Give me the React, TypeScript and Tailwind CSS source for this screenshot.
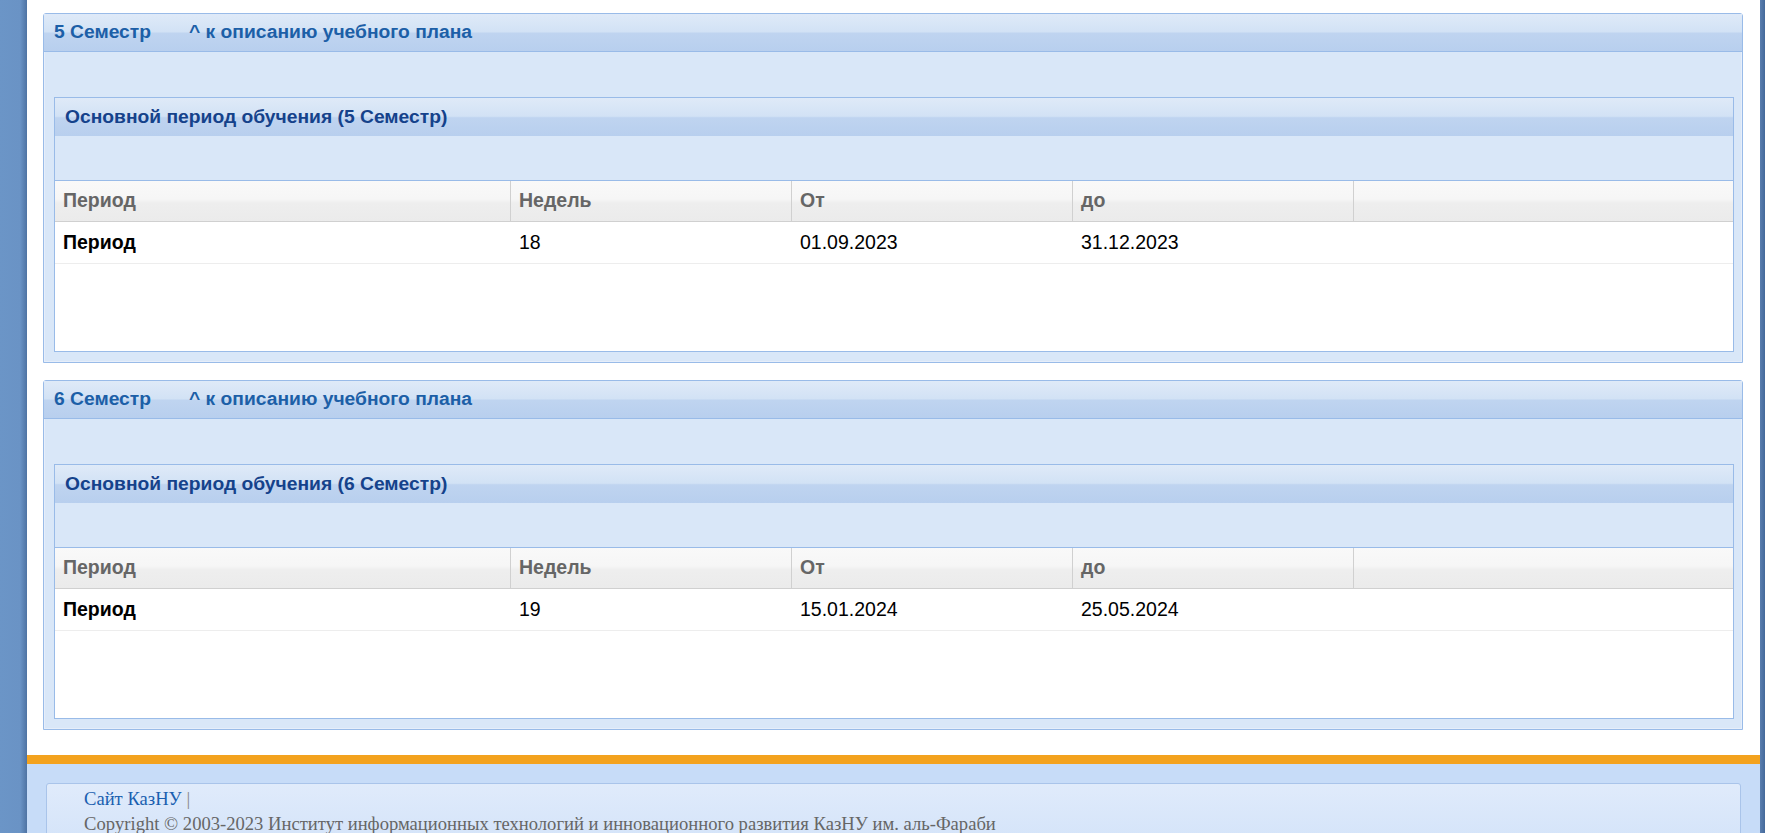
import React from 'react';

type Row = { name: string; weeks: string; from: string; to: string };

const semesters: { num: number; row: Row }[] = [
  { num: 5, row: { name: 'Период', weeks: '18', from: '01.09.2023', to: '31.12.2023' } },
  { num: 6, row: { name: 'Период', weeks: '19', from: '15.01.2024', to: '25.05.2024' } },
];

const headerBg =
  'bg-[linear-gradient(to_bottom,#dfeaf8_0%,#d2e2f5_48%,#bfd4f0_52%,#b8cfee_100%)]';

const SemesterPanel = ({ num, row }: { num: number; row: Row }) => {
  return (
    <div className="border border-[#99bbe8] rounded-t-[3px] bg-[#d9e7f8] shadow-[inset_0_0_0_1px_#e6eefa]">
      <div className={`h-[38px] flex items-center px-[10px] border-b border-[#99bbe8] ${headerBg}`}>
        <span className="text-[19.25px] font-bold text-[#1c5fa7]">{num} Семестр</span>
        <a className="ml-[38px] text-[19.25px] font-bold text-[#1c5fa7] cursor-pointer">^ к описанию учебного плана</a>
      </div>
      <div className="pt-[45px] pl-[10px] pr-[8px] pb-[10px]">
        <div className="border border-[#99bbe8] bg-white">
          <div className={`h-[38px] flex items-center px-[10px] ${headerBg}`}>
            <span className="text-[19.25px] font-bold text-[#15428b]">
              Основной период обучения ({num} Семестр)
            </span>
          </div>
          <div className="h-[45px] bg-[#d9e7f8] border-b border-[#99bbe8]" />
          <div className="h-[41px] flex border-b border-[#d0d0d0] bg-[linear-gradient(to_bottom,#f9f9f9_0%,#f6f6f6_45%,#eeeeee_55%,#ebebeb_100%)] text-[19.5px] font-bold text-[#666]">
            <div className="w-[456px] flex items-center px-[8px] border-r border-[#d0d0d0]">Период</div>
            <div className="w-[281px] flex items-center px-[8px] border-r border-[#d0d0d0]">Недель</div>
            <div className="w-[281px] flex items-center px-[8px] border-r border-[#d0d0d0]">От</div>
            <div className="w-[281px] flex items-center px-[8px] border-r border-[#d0d0d0]">до</div>
            <div className="flex-1" />
          </div>
          <div className="h-[42px] flex border-b border-[#ededed] text-[19.5px] text-black">
            <div className="w-[456px] flex items-center px-[8px] font-bold">{row.name}</div>
            <div className="w-[281px] flex items-center px-[8px]">{row.weeks}</div>
            <div className="w-[281px] flex items-center px-[8px]">{row.from}</div>
            <div className="w-[281px] flex items-center px-[8px]">{row.to}</div>
            <div className="flex-1" />
          </div>
          <div className="h-[87px]" />
        </div>
      </div>
    </div>
  );
};

export default function App() {
  return (
    <div className="min-h-screen flex bg-white font-['Liberation_Sans',Arial,sans-serif]">
      <div className="w-[27px] shrink-0 bg-[linear-gradient(to_right,#6b95c7_0%,#6a93c5_75%,#4e73a3_100%)]" />
      <div className="flex-1 flex flex-col">
        <div className="pt-[13px] pb-[25px] pl-[16px] pr-[17px] flex flex-col gap-[17px]">
          {semesters.map((s) => (
            <SemesterPanel key={s.num} num={s.num} row={s.row} />
          ))}
        </div>
        <div className="h-[9px] bg-[#f3a21e]" />
        <div className="flex-1 bg-[#c7dcf8] pt-[19px] px-[19px]">
          <div className="border border-[#a9c4ea] rounded-t-[3px] bg-[linear-gradient(to_bottom,#e0ebfb_0%,#d3e3f9_100%)] pl-[37px] pt-[2px] pb-[10px] font-['Liberation_Serif','Times_New_Roman',serif] text-[18.6px] leading-[25px]">
            <div>
              <a className="text-[#1a5fb0] cursor-pointer">Сайт КазНУ</a>
              <span className="text-[#888]"> |</span>
            </div>
            <div className="text-[#666]">
              Copyright © 2003-2023 Институт информационных технологий и инновационного развития КазНУ им. аль-Фараби
            </div>
          </div>
        </div>
      </div>
      <div className="w-[5px] shrink-0 bg-[linear-gradient(to_right,#5a7fb0,#45699a)]" />
    </div>
  );
}
